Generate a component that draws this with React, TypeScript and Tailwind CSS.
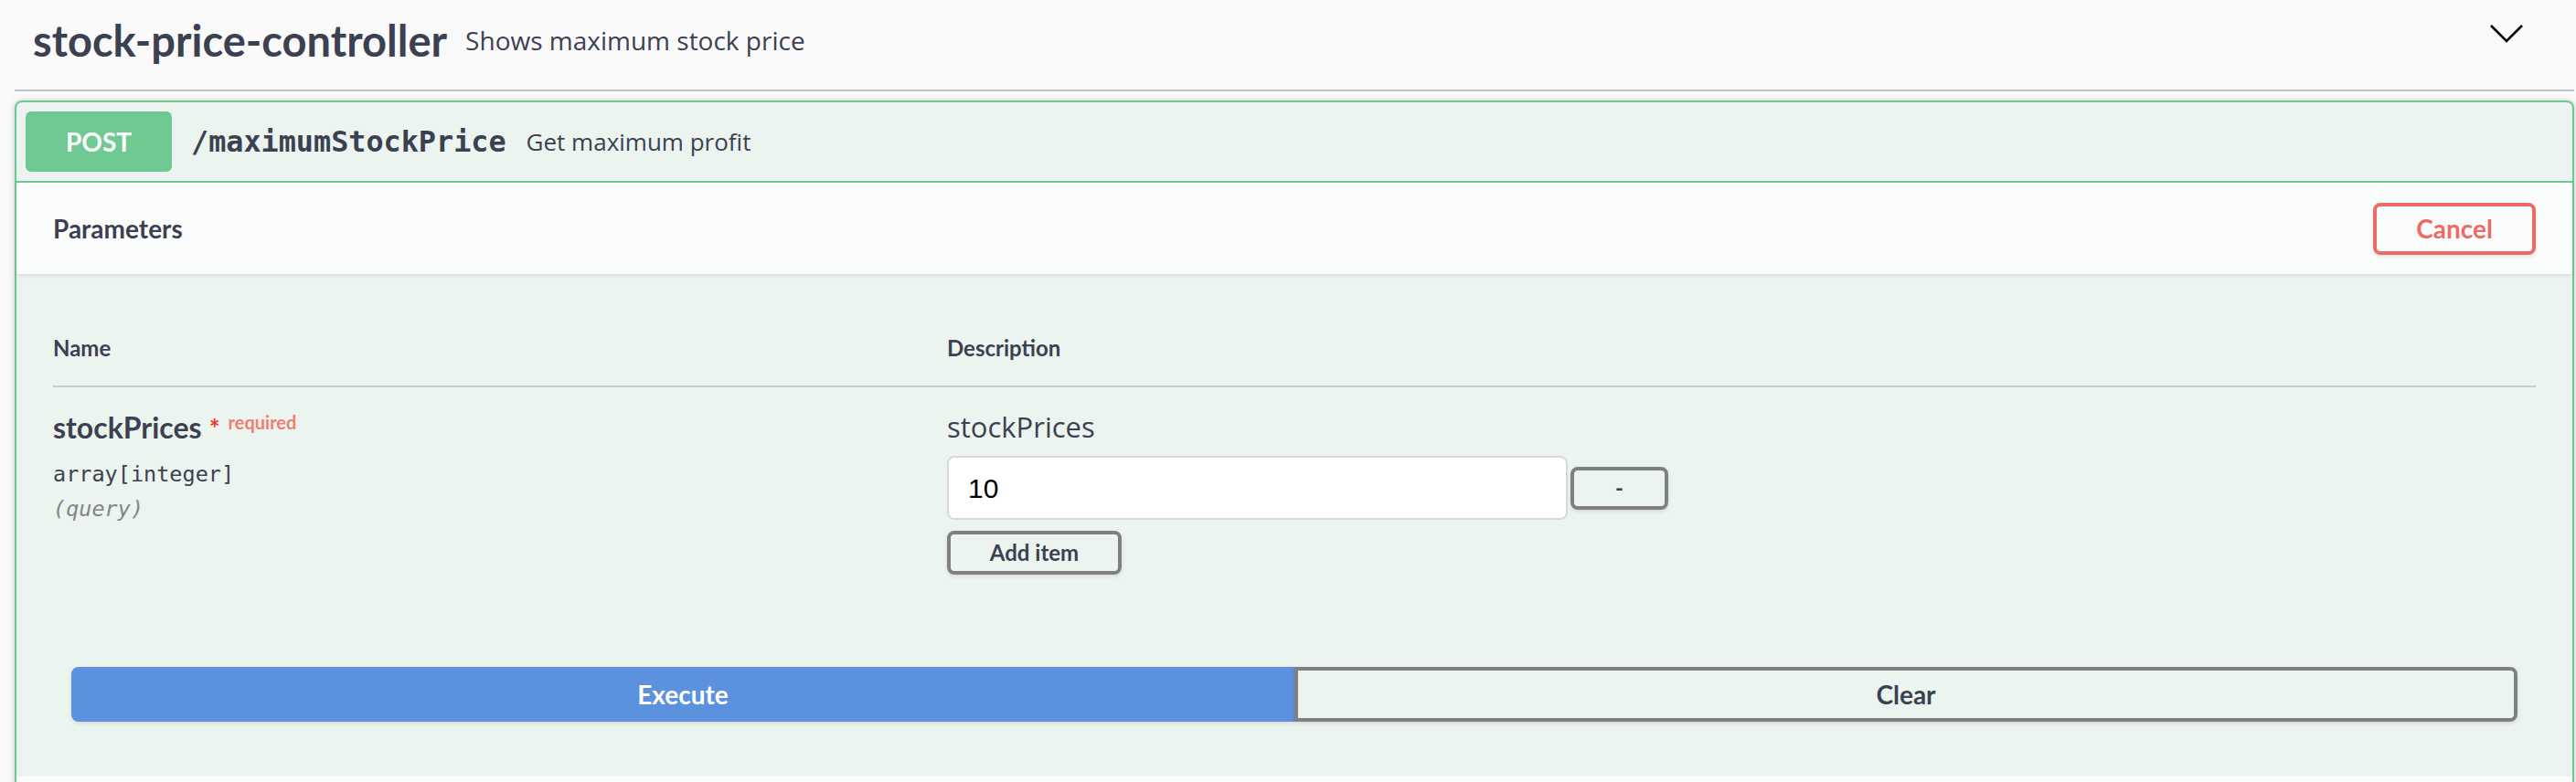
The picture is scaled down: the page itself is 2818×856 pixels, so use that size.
export default function App() {
  return (
    <div className="h-[856px] w-[2818px] overflow-hidden bg-[#fafafa] text-[#3b4151]">
      <div className="ml-[16px] mr-[2px]">
        {/* tag header */}
        <div className="flex h-[100px] items-center border-b-2 border-[#c1c3c7] pb-[10px] pl-[20px]">
          <h3 className="font-['Lato',sans-serif] text-[47px] font-bold leading-none">stock-price-controller</h3>
          <span className="flex-1 px-[20px] font-['Open_Sans',sans-serif] text-[28px]">Shows maximum stock price</span>
          <svg width="40" height="40" viewBox="0 0 40 40" className="mr-[54px] mt-[16px] self-start">
            <polyline points="3,12 20,29 37,12" fill="none" stroke="#000" strokeWidth="2.6" />
          </svg>
        </div>

        {/* opblock */}
        <div className="mt-[10px] rounded-[8px] border-2 border-[#6fc993] bg-[#ecf4ef] shadow-[0_0_6px_rgba(0,0,0,0.19)]">
          <div className="flex h-[88px] items-center border-b-2 border-[#6fc993] p-[10px]">
            <span className="flex h-[66px] w-[160px] items-center justify-center rounded-[6px] bg-[#6fc993] font-['Lato',sans-serif] text-[28px] font-bold text-white">
              POST
            </span>
            <span className="pl-[21px] pr-[22px] font-['DejaVu_Sans_Mono',monospace] text-[31.8px] font-semibold">/maximumStockPrice</span>
            <span className="font-['Open_Sans',sans-serif] text-[26px]">Get maximum profit</span>
          </div>

          {/* section header */}
          <div className="flex h-[100px] items-center justify-between bg-white/80 px-[40px] shadow-[0_2px_4px_rgba(0,0,0,0.1)]">
            <h4 className="font-['Lato',sans-serif] text-[28px] font-bold">Parameters</h4>
            <button className="h-[57px] w-[178px] rounded-[8px] border-4 border-[#ec6b66] bg-transparent font-['Lato',sans-serif] text-[28px] font-bold text-[#ec6b66] shadow-[0_2px_4px_rgba(0,0,0,0.1)]">
              Cancel
            </button>
          </div>

          {/* parameters table */}
          <div className="px-[40px] pb-[41px] pt-[40px]">
            <div className="flex h-[84px] items-center border-b-2 border-[#c9cfce] font-['Lato',sans-serif] text-[24px] font-bold">
              <div className="w-[978px]">Name</div>
              <div>Description</div>
            </div>
            <div className="flex pt-[20px]">
              <div className="w-[978px]">
                <div className="flex items-start">
                  <span className="font-['Lato',sans-serif] text-[32px] font-bold leading-[48px]">stockPrices</span>
                  <span className="ml-[8px] mt-[10px] font-['Lato',sans-serif] text-[28px] font-bold leading-[28px] text-[#e83d2b]">*</span>
                  <span className="ml-[9px] mt-[8px] font-['Lato',sans-serif] text-[20px] font-bold leading-[20px] text-[#ef7f72]">required</span>
                </div>
                <div className="mt-[10px] font-['DejaVu_Sans_Mono',monospace] text-[23.5px] leading-[34px]">array[integer]</div>
                <div className="mt-[4px] font-['DejaVu_Sans_Mono',monospace] text-[23.5px] italic leading-[34px] text-[#858585]">(query)</div>
              </div>
              <div className="flex flex-col items-start">
                <div className="mt-[2px] font-['Open_Sans',sans-serif] text-[31px] leading-[42px]">stockPrices</div>
                <div className="mt-[11px] flex items-center">
                  <div className="flex h-[70px] w-[679px] items-center rounded-[8px] border-2 border-[#d9d9d9] bg-white px-[21px] font-['Liberation_Sans',Arial,sans-serif] text-[30px] text-black">
                    10
                  </div>
                  <button className="ml-[3px] h-[47px] w-[107px] rounded-[8px] border-4 border-[#808080] bg-transparent font-['Lato',sans-serif] text-[24px] font-bold shadow-[0_2px_4px_rgba(0,0,0,0.1)]">
                    -
                  </button>
                </div>
                <button className="mt-[12px] h-[48px] w-[191px] rounded-[8px] border-4 border-[#808080] bg-transparent font-['Lato',sans-serif] text-[24px] font-bold shadow-[0_2px_4px_rgba(0,0,0,0.1)]">
                  Add item
                </button>
              </div>
            </div>
          </div>

          {/* execute */}
          <div className="flex px-[60px] py-[60px]">
            <button className="h-[60px] flex-1 rounded-l-[8px] border-4 border-[#5b91dd] bg-[#5b91dd] font-['Lato',sans-serif] text-[28px] font-bold text-white shadow-[0_2px_4px_rgba(0,0,0,0.1)]">
              Execute
            </button>
            <button className="h-[60px] flex-1 rounded-r-[8px] border-4 border-[#808080] bg-transparent font-['Lato',sans-serif] text-[28px] font-bold text-[#3b4151] shadow-[0_2px_4px_rgba(0,0,0,0.1)]">
              Clear
            </button>
          </div>

          <div className="h-[100px] bg-white/80" />
        </div>
      </div>
    </div>
  );
}
